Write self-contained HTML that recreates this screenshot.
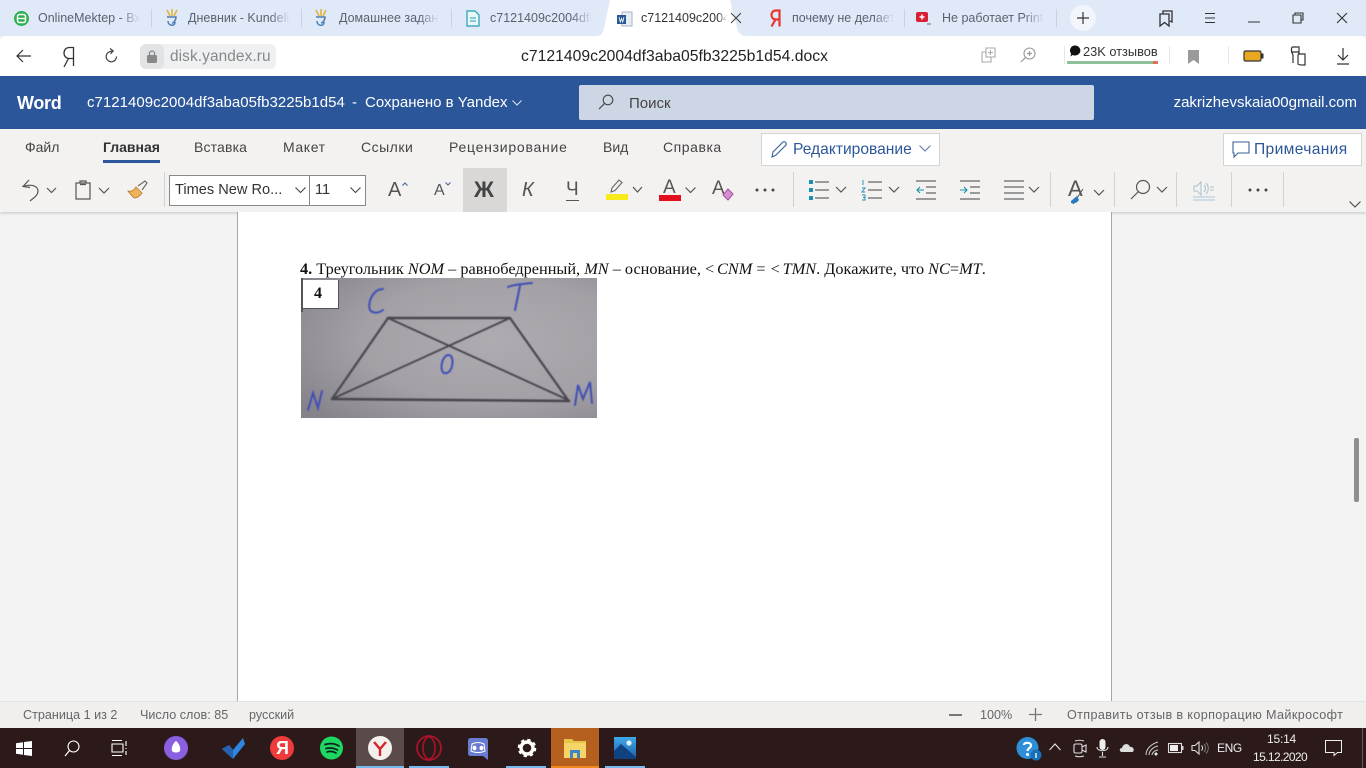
<!DOCTYPE html>
<html lang="ru"><head><meta charset="utf-8"><title>c7121409c2004df3aba05fb3225b1d54.docx</title>
<style>
html,body{margin:0;padding:0;width:1366px;height:768px;overflow:hidden;background:#f3f3f3;font-family:"Liberation Sans","Noto Sans CJK SC",sans-serif}
.a{position:absolute}
.t{position:absolute;white-space:nowrap;line-height:1}
.tab{font-size:12.5px;color:#5a6270;overflow:hidden;-webkit-mask-image:linear-gradient(90deg,#000 80%,transparent 100%);mask-image:linear-gradient(90deg,#000 80%,transparent 100%)}
.sep{position:absolute;width:1px;background:#c8d3e2}
.m{font-size:14px;color:#444}
.rs{position:absolute;width:1px;background:#d4d2d0;top:172px;height:35px}
svg{position:absolute;overflow:visible}
.g{fill:none;stroke:#555;stroke-width:1.2}
.st{font-size:12.6px;color:#666}
.tray{stroke:#ddd;fill:none;stroke-width:1.1}
.lt{margin-right:2px}
</style></head><body>

<!-- Browser tab strip -->
<div class="a" style="left:0;top:0;width:1366px;height:36px;background:#dfe9f8"></div>
<svg style="left:596px;top:0" width="170" height="36"><path d="M0 36 C5 36 7 33 8 28 L14 0 H134 L141 28 C142 33 146 36 150 36Z" fill="#fff"/></svg>

<svg style="left:14px;top:11px" width="16" height="16"><circle cx="7.5" cy="7.5" r="7.5" fill="#2eb04f"/><rect x="3.5" y="3.5" width="8" height="8" rx="2" fill="none" stroke="#fff" stroke-width="1.5"/><path d="M4 7.5H11" stroke="#fff" stroke-width="1.3"/></svg>
<div class="t tab" style="left:38px;top:12px;width:102px">OnlineMektep - Вход</div>
<div class="sep" style="left:151px;top:9px;height:18px"></div>
<svg style="left:164px;top:9px" width="16" height="20"><path d="M3 1L6 7M8 0V7M13 1L10 7" stroke="#e3b341" stroke-width="1.6" fill="none"/><path d="M3 8H12C12 12 9 14 8 14M4 12C4 17 11 18 11 13" stroke="#4f7fb5" stroke-width="1.5" fill="none"/></svg>
<div class="t tab" style="left:188px;top:12px;width:102px">Дневник - Kundelik</div>
<div class="sep" style="left:301px;top:9px;height:18px"></div>
<svg style="left:313px;top:9px" width="16" height="20"><path d="M3 1L6 7M8 0V7M13 1L10 7" stroke="#e3b341" stroke-width="1.6" fill="none"/><path d="M3 8H12C12 12 9 14 8 14M4 12C4 17 11 18 11 13" stroke="#4f7fb5" stroke-width="1.5" fill="none"/></svg>
<div class="t tab" style="left:339px;top:12px;width:100px">Домашнее задание</div>
<div class="sep" style="left:451px;top:9px;height:18px"></div>
<svg style="left:466px;top:10px" width="14" height="17"><path d="M1 1H9L13 5V16H1Z" fill="#eaf6f8" stroke="#1f9fb5" stroke-width="1.2"/><path d="M4 8H10M4 11H10" stroke="#1f9fb5"/></svg>
<div class="t tab" style="left:490px;top:12px;width:102px">c7121409c2004df3aba</div>
<svg style="left:617px;top:11px" width="16" height="16"><path d="M5 1H15V15H5Z" fill="#e8edf4" stroke="#a8b2c0"/><rect x="0" y="4" width="9" height="9" fill="#2b5797"/><path d="M2 6L3.3 11L4.5 7.5L5.7 11L7 6" stroke="#fff" fill="none" stroke-width=".8"/></svg>
<div class="t tab" style="left:641px;top:12px;width:86px;color:#333;-webkit-mask-image:linear-gradient(90deg,#000 90%,transparent 100%);mask-image:linear-gradient(90deg,#000 90%,transparent 100%)">c7121409c2004df</div>
<svg style="left:730px;top:12px" width="12" height="12"><path d="M1 1L11 11M11 1L1 11" stroke="#444" stroke-width="1.1"/></svg>
<svg style="left:770px;top:9px" width="11" height="18"><path d="M9.5 17.5V1.5H6C3 1.5 1.5 3.5 1.5 6C1.5 8.5 3 10.5 6 10.5H9.5M5.5 10.5L1.5 17.5" fill="none" stroke="#e8352e" stroke-width="2.2"/></svg>
<div class="t tab" style="left:792px;top:12px;width:102px">почему не делается</div>
<div class="sep" style="left:904px;top:9px;height:18px"></div>
<svg style="left:916px;top:11px" width="16" height="15"><rect x="0" y="1" width="12" height="10" rx="2" fill="#d81f35"/><path d="M6 3.5V8.5M3.5 6H8.5" stroke="#fff" stroke-width="1.5"/><path d="M11 13H15" stroke="#666"/></svg>
<div class="t tab" style="left:942px;top:12px;width:102px">Не работает PrintScreen</div>
<div class="sep" style="left:1056px;top:9px;height:18px"></div>
<div class="a" style="left:1070px;top:5px;width:26px;height:26px;border-radius:13px;background:#f2f6fc"></div>
<svg style="left:1077px;top:12px" width="12" height="12"><path d="M6 0V12M0 6H12" stroke="#333" stroke-width="1.2"/></svg>
<svg style="left:1159px;top:10px" width="15" height="17"><path d="M4 4V1H13V12L11 11M1 4H10V16L5.5 12.5L1 16Z" fill="none" stroke="#333" stroke-width="1.3"/></svg>
<svg style="left:1204px;top:12px" width="12" height="12"><path d="M1 1.5H11M1 6H11M1 10.5H11" stroke="#333" stroke-width="1"/></svg>
<svg style="left:1248px;top:20px" width="12" height="4"><path d="M0 2H12" stroke="#333"/></svg>
<svg style="left:1292px;top:12px" width="12" height="12"><path d="M3 3V1H11V8H9M1 3H9V11H1Z" fill="none" stroke="#333" stroke-width="1.1"/></svg>
<svg style="left:1336px;top:12px" width="12" height="12"><path d="M1 1L11 11M11 1L1 11" stroke="#333" stroke-width="1.1"/></svg>

<!-- Address bar -->
<div class="a" style="left:0;top:36px;width:1366px;height:40px;background:#fff;border-radius:6px 6px 0 0"></div>
<svg style="left:16px;top:49px" width="16" height="14"><path d="M15 7H1M7 1L1 7L7 13" fill="none" stroke="#333" stroke-width="1.2"/></svg>
<svg style="left:62px;top:46px" width="13" height="22"><path d="M11.5 20V1.5H7.5C4 1.5 2 4 2 7C2 10 4 12.5 7.5 12.5H11.5M6.5 12.5L2 21" fill="none" stroke="#333" stroke-width="1.3"/></svg>
<svg style="left:104px;top:48px" width="15" height="16"><path d="M12.5 8.5A5.2 5.2 0 1 1 6 3.6L9 3" fill="none" stroke="#444" stroke-width="1.2"/><path d="M6 0.5L9.2 3L6.5 5.8" fill="none" stroke="#444" stroke-width="1.2"/></svg>
<div class="a" style="left:140px;top:44px;width:136px;height:25px;border-radius:6px;background:#eff0f1"></div>
<div class="a" style="left:140px;top:44px;width:24px;height:25px;border-radius:6px;background:#e2e3e5"></div>
<svg style="left:146px;top:50px" width="12" height="13"><rect x="1" y="5" width="10" height="8" rx="1.5" fill="#888"/><path d="M3.5 5V3.5A2.5 2.5 0 0 1 8.5 3.5V5" fill="none" stroke="#888" stroke-width="1.3"/></svg>
<div class="t" style="left:170px;top:49px;font-size:15.4px;color:#888;letter-spacing:.1px">disk.yandex.ru</div>
<div class="t" style="left:521px;top:49px;font-size:15.7px;color:#222;letter-spacing:.02px">c7121409c2004df3aba05fb3225b1d54.docx</div>
<svg style="left:981px;top:47px" width="15" height="17"><path d="M5 1H14V10H5ZM9.5 3V8M7 5.5H12M5 5H1V15H10V10" fill="none" stroke="#aaa" stroke-width="1.1"/></svg>
<svg style="left:1020px;top:47px" width="16" height="17"><circle cx="9.5" cy="6.5" r="5.5" fill="none" stroke="#999" stroke-width="1.1"/><path d="M9.5 4V9M7 6.5H12M5.5 10.5L1 15" fill="none" stroke="#999" stroke-width="1.2"/></svg>
<div class="a" style="left:1064px;top:46px;width:1px;height:18px;background:#e6e6e6"></div>
<svg style="left:1069px;top:45px" width="13" height="13"><path d="M6 0.5A5.5 5 0 1 1 3.5 10L1.5 11.5L2 8.5A5 5 0 0 1 6 .5Z" fill="#111"/></svg>
<div class="t" style="left:1083px;top:46px;font-size:12.8px;color:#333">23K отзывов</div>
<div class="a" style="left:1067px;top:61px;width:86px;height:3px;background:#8fc09b"></div>
<div class="a" style="left:1153px;top:61px;width:5px;height:3px;background:#e0705d"></div>
<div class="a" style="left:1169px;top:46px;width:1px;height:18px;background:#e6e6e6"></div>
<svg style="left:1188px;top:50px" width="12" height="14"><path d="M0 0H11V14L5.5 10L0 14Z" fill="#9a9a9a"/></svg>
<div class="a" style="left:1228px;top:46px;width:1px;height:18px;background:#e6e6e6"></div>
<svg style="left:1243px;top:50px" width="22" height="12"><rect x="1" y="1" width="17" height="10" rx="1.5" fill="#e8a820" stroke="#333" stroke-width="1.2"/><rect x="18.5" y="3.5" width="2" height="5" fill="#333"/></svg>
<svg style="left:1290px;top:46px" width="18" height="20"><path d="M2 1H9V7L8 9V18C8 19 12 19 14 19H15V8H8M1 6H9M2 1C1 3 1 5 3 9V17" fill="none" stroke="#333" stroke-width="1.2"/></svg>
<svg style="left:1336px;top:48px" width="14" height="17"><path d="M7 0V12M2 7L7 12L12 7M1 16H13" fill="none" stroke="#333" stroke-width="1.2"/></svg>

<!-- Word title bar -->
<div class="a" style="left:0;top:76px;width:1366px;height:53px;background:#2b579a"></div>
<div class="t" style="left:17px;top:94px;font-size:18px;font-weight:bold;color:#fff;letter-spacing:-.3px">Word</div>
<div class="t" style="left:87px;top:95px;font-size:15px;color:#fff;letter-spacing:.03px">c7121409c2004df3aba05fb3225b1d54</div>
<div class="t" style="left:352px;top:95px;font-size:15px;color:#fff">-</div>
<div class="t" style="left:365px;top:95px;font-size:15px;color:#fff">Сохранено в Yandex</div>
<svg style="left:512px;top:100px" width="10" height="6"><path d="M.5 .5L5 5L9.5 .5" fill="none" stroke="#dfe6f2"/></svg>
<div class="a" style="left:579px;top:85px;width:515px;height:35px;border-radius:2px;background:#cdd6e4"></div>
<svg style="left:598px;top:94px" width="16" height="16"><circle cx="10" cy="6" r="4.8" fill="none" stroke="#444" stroke-width="1.1"/><path d="M6.5 9.5L1 15" stroke="#444" stroke-width="1.2"/></svg>
<div class="t" style="left:629px;top:96px;font-size:15px;color:#444">Поиск</div>
<div class="t" style="right:9px;top:95px;font-size:15px;color:#fff">zakrizhevskaia00gmail.com</div>

<!-- Ribbon -->
<div class="a" style="left:0;top:129px;width:1366px;height:83px;background:#f4f2f0;box-shadow:0 1px 3px rgba(0,0,0,.2)"></div>
<div class="t m" style="left:25px;top:140px">Файл</div>
<div class="t m" style="left:103px;top:140px;font-weight:bold;color:#333;letter-spacing:0">Главная</div>
<div class="a" style="left:103px;top:160px;width:57px;height:3px;background:#2b579a"></div>
<div class="t m" style="left:194px;top:140px;letter-spacing:.15px">Вставка</div>
<div class="t m" style="left:283px;top:140px;letter-spacing:.6px">Макет</div>
<div class="t m" style="left:361px;top:140px;letter-spacing:.5px">Ссылки</div>
<div class="t m" style="left:449px;top:140px;letter-spacing:.75px">Рецензирование</div>
<div class="t m" style="left:603px;top:140px">Вид</div>
<div class="t m" style="left:663px;top:140px;letter-spacing:.55px">Справка</div>

<div class="a" style="left:761px;top:133px;width:177px;height:31px;background:#fff;border:1px solid #d6d4d2"></div>
<svg style="left:770px;top:140px" width="20" height="19"><path d="M2 17L3 12L13 2C15 1 17 3 16 5L6 15Z" fill="none" stroke="#3a6298" stroke-width="1.1"/></svg>
<div class="t" style="left:793px;top:142px;font-size:15.6px;color:#2b579a">Редактирование</div>
<svg style="left:919px;top:145px" width="12" height="7"><path d="M.5 .5L6 6L11.5 .5" fill="none" stroke="#5a7ba8"/></svg>
<div class="a" style="left:1223px;top:133px;width:137px;height:31px;background:#fff;border:1px solid #d6d4d2"></div>
<svg style="left:1232px;top:141px" width="18" height="17"><path d="M1 1H17V12H6L2 16V12H1Z" fill="none" stroke="#3a6298" stroke-width="1.1"/></svg>
<div class="t" style="left:1254px;top:142px;font-size:15.6px;color:#2b579a;letter-spacing:.35px">Примечания</div>

<!-- toolbar -->
<svg style="left:21px;top:179px" width="38" height="24"><path d="M8 1L2 7.5L9 8.5M2.5 7.5C8 5 17 6 17 12C17 17 11 20 9 22" fill="none" stroke="#555" stroke-width="1.2"/><path d="M26 9L30.5 13.5L35 9" class="g"/></svg>
<svg style="left:75px;top:180px" width="38" height="22"><path d="M1 3H15V19H1ZM5 3V1H11V3M5 4.5H11" class="g"/><path d="M24 8L29 13L34 8" class="g"/></svg>
<svg style="left:127px;top:180px" width="22" height="20"><path d="M1 11C5 12 7 10 9 7L15 13C13 16 10 18 7 18C5 16 3 14 1 11Z" fill="#f0b25a" stroke="#b57a27" stroke-width=".8"/><path d="M11 6L18 1L20 3L15 10" fill="none" stroke="#666" stroke-width="1.1"/></svg>
<div class="rs" style="left:164px"></div>
<div class="a" style="left:169px;top:175px;width:139px;height:29px;background:#fff;border:1px solid #8a8886"></div>
<div class="a" style="left:310px;top:175px;width:55px;height:29px;background:#fff;border:1px solid #8a8886;border-left:0"></div>
<div class="t" style="left:175px;top:183px;font-size:14.6px;color:#333">Times New Ro...</div>
<div class="t" style="left:315px;top:183px;font-size:14.6px;color:#333">11</div>
<svg style="left:295px;top:187px" width="11" height="7"><path d="M.5 .5L5.5 5.5L10.5 .5" fill="none" stroke="#444" stroke-width="1.1"/></svg>
<svg style="left:350px;top:187px" width="11" height="7"><path d="M.5 .5L5.5 5.5L10.5 .5" fill="none" stroke="#444" stroke-width="1.1"/></svg>
<div class="t" style="left:388px;top:180px;font-size:20px;color:#555">A</div>
<svg style="left:402px;top:182px" width="6" height="4"><path d="M.5 3.5L3 1L5.5 3.5" fill="none" stroke="#3a6298"/></svg>
<div class="t" style="left:434px;top:183px;font-size:16px;color:#555">A</div>
<svg style="left:445px;top:182px" width="6" height="4"><path d="M.5 .5L3 3L5.5 .5" fill="none" stroke="#3a6298"/></svg>
<div class="a" style="left:463px;top:168px;width:44px;height:44px;background:#d9d8d6"></div>
<div class="t" style="left:474px;top:179px;font-size:22px;font-weight:bold;color:#444">Ж</div>
<div class="t" style="left:522px;top:180px;font-size:20px;font-style:italic;color:#555">К</div>
<div class="t" style="left:566px;top:180px;font-size:19px;color:#555;border-bottom:1.5px solid #555;padding-bottom:1px">Ч</div>
<svg style="left:606px;top:179px" width="40" height="22"><path d="M5 13L6 9L13 1L16 3.5L9 11.5L5 13Z" fill="none" stroke="#666" stroke-width="1.1"/><rect x="0" y="15" width="22" height="6" fill="#f7ec1a"/><path d="M27 8L31.5 13L36 8" class="g"/></svg>
<div class="t" style="left:663px;top:178px;font-size:19px;color:#555">A</div>
<div class="a" style="left:659px;top:195px;width:22px;height:6px;background:#e2101c"></div>
<svg style="left:685px;top:187px" width="11" height="7"><path d="M.5 .5L5.5 5.5L10.5 .5" class="g"/></svg>
<div class="t" style="left:712px;top:179px;font-size:19px;color:#555">A</div>
<svg style="left:722px;top:188px" width="12" height="13"><path d="M6 1L11 6L6 12L1 7Z" fill="#d78fd3" stroke="#a44ca0"/></svg>
<svg style="left:755px;top:188px" width="20" height="4"><circle cx="2" cy="2" r="1.5" fill="#444"/><circle cx="10" cy="2" r="1.5" fill="#444"/><circle cx="18" cy="2" r="1.5" fill="#444"/></svg>
<div class="rs" style="left:793px"></div>
<svg style="left:809px;top:180px" width="40" height="20"><rect x="0" y="0" width="4" height="4" fill="#1a8fb0"/><rect x="0" y="8" width="4" height="4" fill="#1a8fb0"/><rect x="0" y="16" width="4" height="4" fill="#1a8fb0"/><path d="M6 2H20M6 10H20M6 18H20" stroke="#666" stroke-width="1.3"/><path d="M27 7L32 12L37 7" class="g"/></svg>
<svg style="left:862px;top:180px" width="40" height="20"><path d="M1 0V5M0 8H3L0 12H3M0 15H3V20H0M3 17.5H1" stroke="#1a8fb0" fill="none" stroke-width=".9"/><path d="M6 2H20M6 10H20M6 18H20" stroke="#666" stroke-width="1.3"/><path d="M27 7L32 12L37 7" class="g"/></svg>
<svg style="left:915px;top:180px" width="22" height="20"><path d="M1 1H21M11 7H21M11 13H21M1 19H21" stroke="#666" stroke-width="1.3"/><path d="M9 10H2M5 7L2 10L5 13" fill="none" stroke="#1a8fb0" stroke-width="1.1"/></svg>
<svg style="left:959px;top:180px" width="22" height="20"><path d="M1 1H21M11 7H21M11 13H21M1 19H21" stroke="#666" stroke-width="1.3"/><path d="M1 10H8M5 7L8 10L5 13" fill="none" stroke="#1a8fb0" stroke-width="1.1"/></svg>
<svg style="left:1004px;top:180px" width="38" height="20"><path d="M0 1H20M0 7H20M0 13H20M0 19H20" stroke="#666" stroke-width="1.3"/><path d="M25 7L30 12L35 7" class="g"/></svg>
<div class="rs" style="left:1050px"></div>
<div class="t" style="left:1068px;top:178px;font-size:22px;color:#555">A</div>
<svg style="left:1070px;top:186px" width="36" height="20"><path d="M3 18L13 3" stroke="#555"/><path d="M1 15L7 10L9 14C7 17 4 18 1 17Z" fill="#2b79c2"/><path d="M24 4L29 9L34 4" class="g"/></svg>
<div class="rs" style="left:1114px"></div>
<svg style="left:1130px;top:179px" width="42" height="22"><circle cx="13" cy="8" r="6.5" class="g"/><path d="M8.5 12.5L1 20" class="g"/><path d="M27 8L32 13L37 8" class="g"/></svg>
<div class="rs" style="left:1176px"></div>
<svg style="left:1193px;top:180px" width="22" height="21"><path d="M1 6H4L8 2V15L4 11H1ZM11 5C13 7 13 10 11 12M13 3C16 6 16 11 13 14M17 7H21M17 10H21" fill="none" stroke="#a8c2cf"/><path d="M0 17H22M0 20H22" stroke="#a8c8da"/></svg>
<div class="rs" style="left:1231px"></div>
<svg style="left:1248px;top:188px" width="20" height="4"><circle cx="2" cy="2" r="1.5" fill="#444"/><circle cx="10" cy="2" r="1.5" fill="#444"/><circle cx="18" cy="2" r="1.5" fill="#444"/></svg>
<div class="rs" style="left:1283px"></div>
<svg style="left:1349px;top:201px" width="12" height="7"><path d="M.5 .5L6 6L11.5 .5" fill="none" stroke="#444" stroke-width="1.1"/></svg>

<!-- Document -->
<div class="a" style="left:237px;top:212px;width:873px;height:490px;background:#fff;border-left:1px solid #a6a6a6;border-right:1px solid #a6a6a6"></div>
<div class="t" style="left:300px;top:261px;font-family:'Liberation Serif',serif;font-size:16.3px;color:#111;white-space:pre"><b>4.</b> Треугольник <i>NOM</i> – равнобедренный, <i>MN</i> – основание, <i><span class="lt" style="margin-left:-1px">&lt;</span>CNM</i> = <i><span class="lt">&lt;</span>TMN</i>. Докажите, что <i>NC</i>=<i>MT</i>.</div>

<svg style="left:301px;top:278px" width="296" height="140" viewBox="0 0 296 140">
<defs>
<radialGradient id="p" cx=".65" cy=".45" r=".8"><stop offset="0" stop-color="#aeabb1"/><stop offset=".55" stop-color="#a3a0a6"/><stop offset="1" stop-color="#86828a"/></radialGradient>
<filter id="b" x="-5%" y="-5%" width="110%" height="110%"><feGaussianBlur stdDeviation=".55"/></filter>
</defs>
<rect width="296" height="140" fill="url(#p)"/>
<g filter="url(#b)" fill="none" stroke="#4a4750" stroke-linecap="round">
<path d="M87 40L209 40" stroke-width="2.6"/>
<path d="M87 40L31 121M209 40L267 122" stroke-width="2.2"/>
<path d="M87 40L265 121M209 40L31 121" stroke-width="1.9"/>
<path d="M31 121L268 123" stroke-width="2.6"/>
</g>
<g filter="url(#b)" fill="none" stroke="#3f4fb8" stroke-width="2" stroke-linecap="round">
<path d="M82 11C72 11 66 25 69 32C72 36 78 35 82 32"/>
<path d="M207 9C214 6 222 6 231 5M219 8L214 32"/>
<path d="M147 77C141 78 138 92 143 95C150 97 154 84 150 78C149 77 148 77 147 77Z"/>
<path d="M7 132L12 115L17 130L21 113"/>
<path d="M274 127L277 107L282 121L289 104L291 125"/>
</g>
</svg>
<div class="a" style="left:303px;top:280px;width:35px;height:28px;background:#fff;border-right:1px solid #555;border-bottom:1px solid #555"></div>
<div class="a" style="left:301px;top:278px;width:2px;height:34px;background:#555"></div>
<div class="t" style="left:314px;top:286px;font-family:'Liberation Serif',serif;font-size:16px;font-weight:bold;color:#111">4</div>

<div class="a" style="left:1354px;top:438px;width:5px;height:64px;border-radius:2px;background:#8f8f8f"></div>

<!-- Status bar -->
<div class="a" style="left:0;top:701px;width:1366px;height:27px;background:#f0efee;border-top:1px solid #e2e2e2;box-sizing:border-box"></div>
<div class="t st" style="left:23px;top:709px">Страница 1 из 2</div>
<div class="t st" style="left:140px;top:709px">Число слов: 85</div>
<div class="t st" style="left:249px;top:709px">русский</div>
<div class="a" style="left:949px;top:714px;width:13px;height:1.5px;background:#777"></div>
<div class="t st" style="left:980px;top:709px">100%</div>
<svg style="left:1029px;top:708px" width="13" height="13"><path d="M6.5 0V13M0 6.5H13" stroke="#777" stroke-width="1.3"/></svg>
<div class="t st" style="left:1067px;top:709px;letter-spacing:.37px">Отправить отзыв в корпорацию Майкрософт</div>

<!-- Taskbar -->
<div class="a" style="left:0;top:728px;width:1366px;height:40px;background:#2c1a1a"></div>
<svg style="left:16px;top:741px" width="16" height="15"><path d="M0 2.2L7 1.2V7H0ZM8 1L16 0V7H8ZM0 8H7V13.8L0 12.8ZM8 8H16V15L8 14Z" fill="#fff"/></svg>
<svg style="left:64px;top:740px" width="16" height="17"><circle cx="9.5" cy="6.5" r="5.5" fill="none" stroke="#fff" stroke-width="1.1"/><path d="M5.5 10.5L1 16" stroke="#fff" stroke-width="1.2"/></svg>
<svg style="left:111px;top:740px" width="18" height="16"><path d="M1 .5H11M1 15.5H11M1 4H12V12H1ZM15 1V6M15 8V9M15 11V15" fill="none" stroke="#fff" stroke-width="1.1"/></svg>
<svg style="left:164px;top:736px" width="24" height="24"><ellipse cx="12" cy="12" rx="12" ry="12" fill="#8a5fe0"/><path d="M12 5C15 7 17 12 16 15C15 17 9 17 8 15C7 12 9 7 12 5Z" fill="#fff"/></svg>
<svg style="left:220px;top:736px" width="26" height="24"><path d="M2 13L9 9L13 14L23 2L25 8L13 23Z" fill="#2d87e0"/><path d="M2 13L9 9L13 14L13 23Z" fill="#2462b0"/></svg>
<svg style="left:270px;top:736px" width="24" height="24"><circle cx="12" cy="12" r="12" fill="#ef3b3b"/></svg>
<div class="t" style="left:276px;top:739px;font-size:18px;color:#fff;font-weight:bold">Я</div>
<svg style="left:320px;top:736px" width="23" height="24"><circle cx="11.5" cy="12" r="11.5" fill="#1ed760"/><path d="M5 8.5C10 7 15 7.5 19 10M6 12.5C10 11.5 14 12 17.5 14M7 16C10 15 13.5 15.5 16 17" fill="none" stroke="#122" stroke-width="1.7" stroke-linecap="round"/></svg>
<div class="a" style="left:356px;top:728px;width:48px;height:40px;background:#5a4a4a"></div>
<div class="a" style="left:356px;top:766px;width:48px;height:2px;background:#76b9ed"></div>
<svg style="left:368px;top:736px" width="24" height="24"><circle cx="12" cy="12" r="12" fill="#f4f0ee"/><path d="M6 6L12 13V20M18 6L12 13" fill="none" stroke="#d8232a" stroke-width="2.4"/></svg>
<div class="a" style="left:409px;top:766px;width:40px;height:2px;background:#76b9ed"></div>
<svg style="left:416px;top:735px" width="26" height="26"><ellipse cx="13" cy="13" rx="12" ry="12" fill="none" stroke="#a8132a" stroke-width="1.8"/><ellipse cx="13" cy="13" rx="6" ry="11" fill="none" stroke="#a8132a" stroke-width="1.6"/></svg>
<svg style="left:468px;top:738px" width="20" height="22"><path d="M3 0H17C19 0 20 1 20 3V22L15 18H3C1 18 0 17 0 15V3C0 1 1 0 3 0Z" fill="#6a7ccf"/><ellipse cx="6.5" cy="10" rx="2" ry="2.3" fill="#fff"/><ellipse cx="13.5" cy="10" rx="2" ry="2.3" fill="#fff"/><path d="M4 6C8 4 12 4 16 6L17 13C13 15 7 15 3 13Z" fill="none" stroke="#fff"/></svg>
<div class="a" style="left:506px;top:766px;width:40px;height:2px;background:#76b9ed"></div>
<svg style="left:517px;top:738px" width="20" height="20"><circle cx="10" cy="10" r="6" fill="none" stroke="#fff" stroke-width="3.4"/><circle cx="10" cy="10" r="8" fill="none" stroke="#fff" stroke-width="2.6" stroke-dasharray="3.2 3.1"/></svg>
<div class="a" style="left:551px;top:728px;width:48px;height:40px;background:#b5601f"></div>
<div class="a" style="left:551px;top:766px;width:48px;height:2px;background:#f08a1d"></div>
<svg style="left:564px;top:738px" width="22" height="20"><path d="M0 1H8L10 3H22V8H0Z" fill="#e7c44a"/><path d="M0 5H22V20H0Z" fill="#f5d469"/><rect x="6" y="12" width="10" height="8" fill="#3d86c6"/><rect x="9" y="15" width="4" height="5" fill="#f5d469"/></svg>
<div class="a" style="left:605px;top:766px;width:40px;height:2px;background:#76b9ed"></div>
<svg style="left:614px;top:737px" width="22" height="22"><defs><linearGradient id="ph" x1="0" y1="0" x2="0" y2="1"><stop offset="0" stop-color="#3ea8e8"/><stop offset="1" stop-color="#1f5fa8"/></linearGradient></defs><rect width="22" height="22" fill="url(#ph)"/><path d="M0 22V14L7 7L22 20V22Z" fill="#10427f"/><circle cx="15" cy="6" r="2.6" fill="#e7f3fb"/></svg>

<!-- Tray -->
<svg style="left:1016px;top:736px" width="26" height="26"><circle cx="11.5" cy="12" r="11" fill="#2d8fd8"/><path d="M8 9C8 6 15 6 15 9.5C15 12 11.5 12 11.5 15" fill="none" stroke="#fff" stroke-width="2.2"/><circle cx="11.5" cy="18.5" r="1.5" fill="#fff"/><circle cx="20" cy="19" r="5.5" fill="#1670b8"/><path d="M20 17V22" stroke="#fff" stroke-width="1.3"/></svg>
<svg style="left:1049px;top:743px" width="12" height="8"><path d="M.5 7L6 1L11.5 7" fill="none" stroke="#e5e5e5" stroke-width="1.1"/></svg>
<svg style="left:1073px;top:740px" width="14" height="17"><path d="M2 1C5 0 8 0 11 1M2 16C5 17 8 17 11 16" class="tray"/><rect x="1" y="4" width="8" height="9" rx="1.5" class="tray"/><path d="M9 7L13 5V12L9 10" class="tray"/></svg>
<svg style="left:1096px;top:739px" width="13" height="19"><rect x="3.5" y="0" width="6" height="11" rx="3" fill="#eee"/><path d="M1 8C1 13 12 13 12 8M6.5 13V17M3 18H10" class="tray"/></svg>
<svg style="left:1119px;top:742px" width="16" height="11"><path d="M3 10C0 10 0 6 3 6C4 1 10 1 11 5C15 4 16 10 13 10Z" fill="#ddd"/></svg>
<svg style="left:1145px;top:741px" width="14" height="15"><path d="M1 14C1 8 6 3 13 1M4 14C4 10 8 6 13 5M7 14C7 12 10 9 13 9" fill="none" stroke="#ccc" stroke-width="1"/><circle cx="11" cy="13" r="1.5" fill="#eee"/></svg>
<svg style="left:1168px;top:743px" width="16" height="10"><rect x=".5" y=".5" width="13" height="9" class="tray"/><rect x="2" y="2" width="8" height="6" fill="#eee"/><rect x="14" y="3" width="1.5" height="4" fill="#ddd"/></svg>
<svg style="left:1191px;top:741px" width="17" height="14"><path d="M1 4.5H4L8 1V13L4 9.5H1ZM10.5 4.5C12 6 12 8 10.5 9.5" class="tray"/><path d="M13 3C15 5 15 9 13 11M15 1.5C18 5 18 9 15 12.5" fill="none" stroke="#777" stroke-width="1"/></svg>
<div class="t" style="left:1217px;top:742px;font-size:12px;color:#eee;letter-spacing:-.4px">ENG</div>
<div class="t" style="left:1267px;top:733px;font-size:12px;color:#eee;letter-spacing:-.2px">15:14</div>
<div class="t" style="left:1253px;top:751px;font-size:12px;color:#eee;letter-spacing:-.6px">15.12.2020</div>
<svg style="left:1325px;top:740px" width="17" height="16"><path d="M.5 .5H16.5V12.5H12.5L9 15.5V12.5H.5Z" fill="none" stroke="#eee"/></svg>
<div class="a" style="left:1362px;top:728px;width:1px;height:40px;background:#6a5a5a"></div>
</body></html>
